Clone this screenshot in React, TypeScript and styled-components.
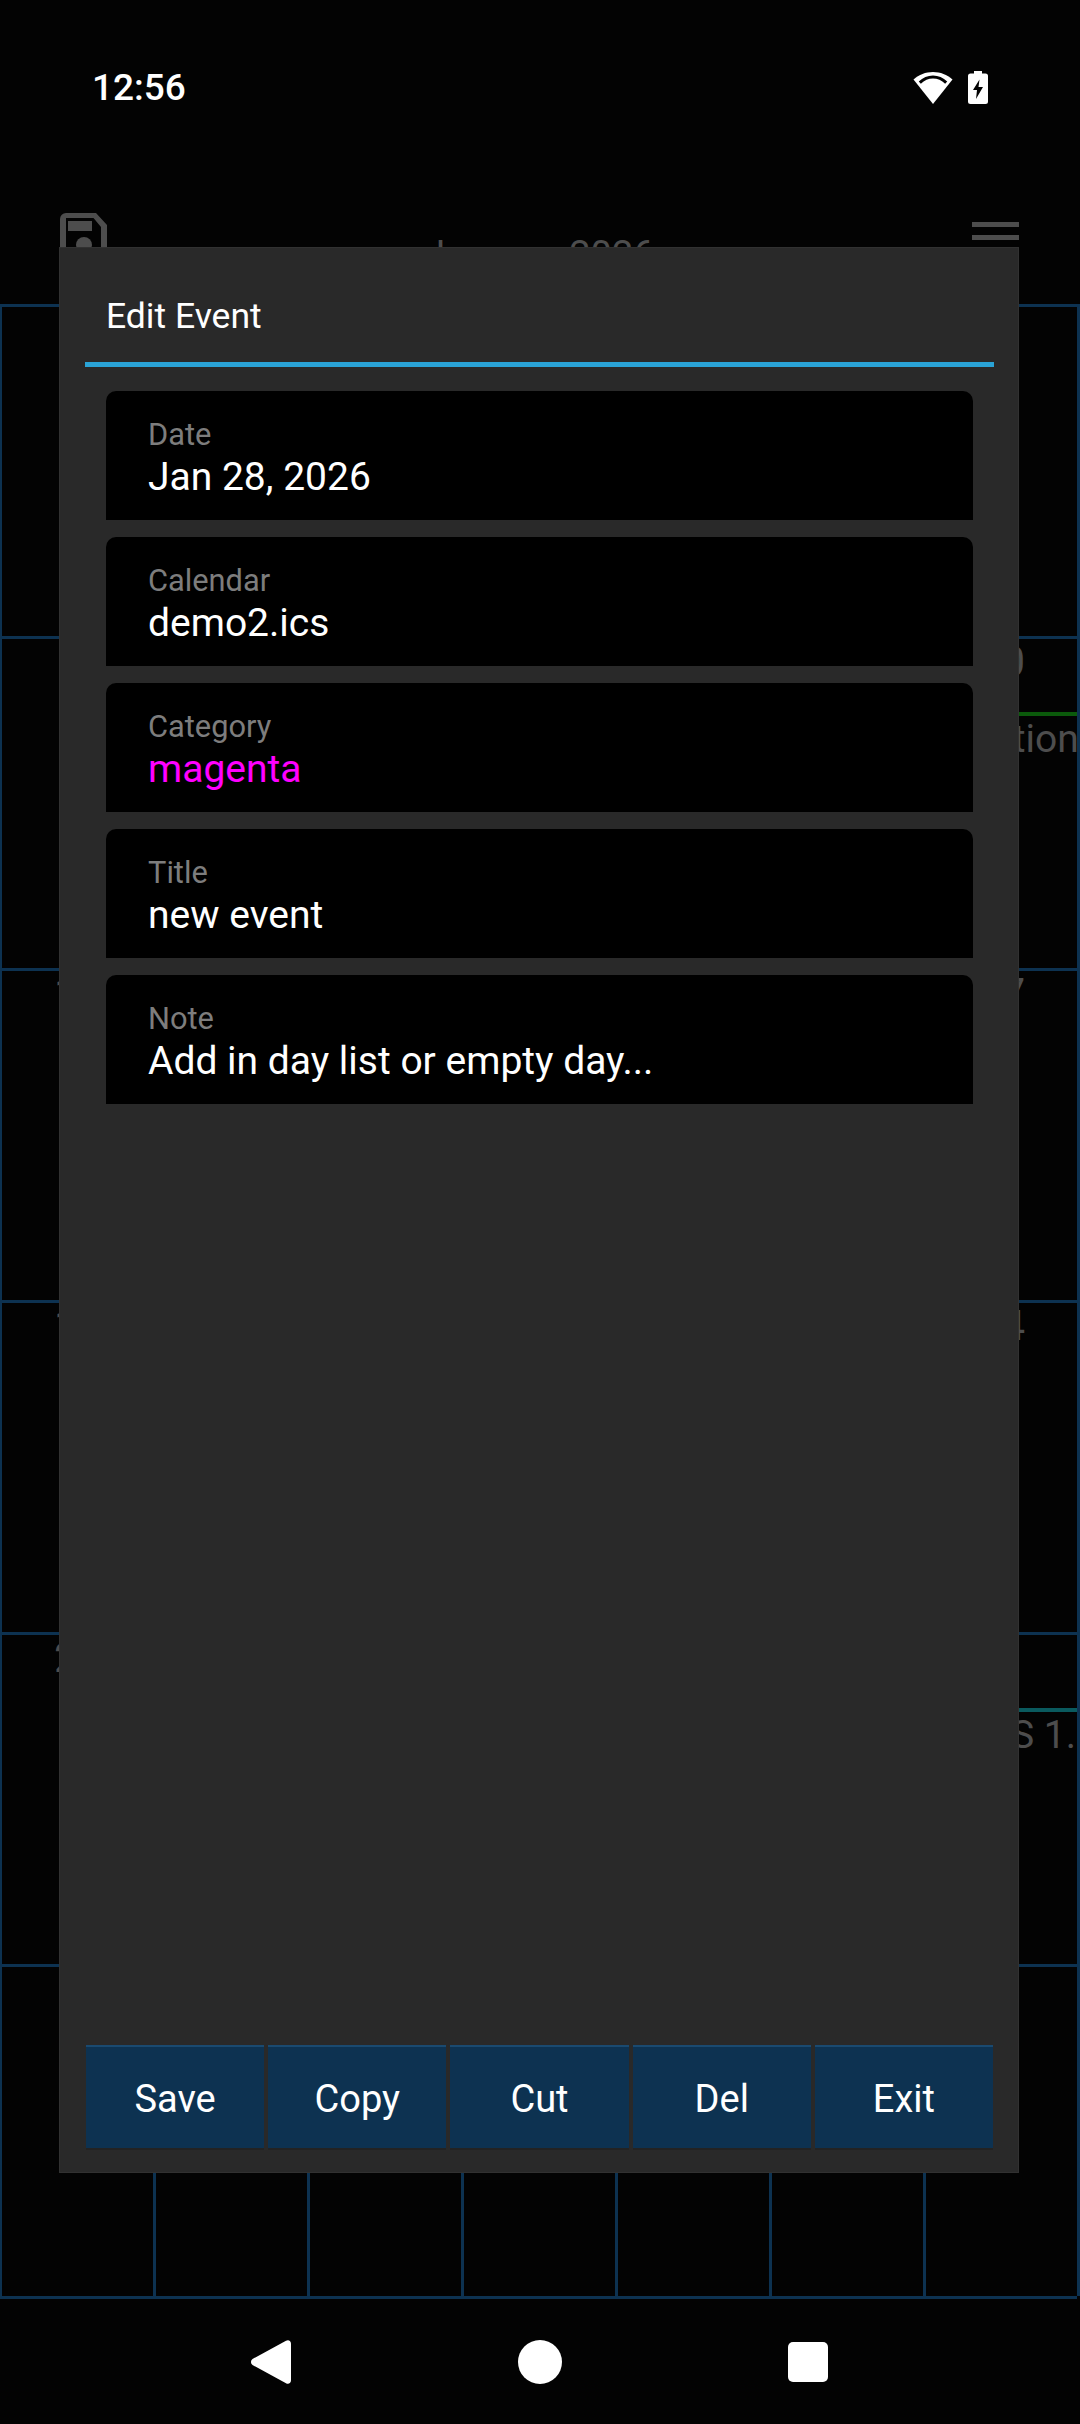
import styled, { createGlobalStyle } from "styled-components";

const GlobalStyle = createGlobalStyle`
  html, body {
    margin: 0;
    padding: 0;
    background: #030303;
  }
  * {
    box-sizing: border-box;
  }
  body {
    font-family: Roboto, "Liberation Sans", sans-serif;
  }
`;

interface CalendarDay {
  day?: number;
  bar?: string;
  label?: string;
}

// January 2026 starts on a Thursday, days outside the month stay empty
const days: CalendarDay[] = Array.from({ length: 42 }, (_, index) => {
  const day = index - 3;
  if (day < 1 || day > 31) return {};
  if (day === 10) return { day, bar: "#0b5a0b", label: "Vacation" };
  if (day === 31) return { day, bar: "#0a5a5e", label: "ROMS 1.0" };
  return { day };
});

const fields = [
  { label: "Date", value: "Jan 28, 2026" },
  { label: "Calendar", value: "demo2.ics" },
  { label: "Category", value: "magenta", color: "#ff00ff" },
  { label: "Title", value: "new event" },
  { label: "Note", value: "Add in day list or empty day..." },
];

const actions = ["Save", "Copy", "Cut", "Del", "Exit"];

export default function App() {
  return (
    <Screen>
      <GlobalStyle />
      <StatusBar>
        <Clock>12:56</Clock>
        <StatusIcons>
          <svg width="40" height="32" viewBox="0 0 40 32">
            <path
              fill="#fff"
              d="M20 0C12.6 0 6 2.700.5 7.600L20 32 39.500 7.600C34 2.700 27.400 0 20 0Z"
            />
            <path
              fill="none"
              stroke="#030303"
              strokeWidth="3"
              d="M6.800 10.600C10.500 7 15 5 20 5s9.500 2 13.200 5.600"
            />
          </svg>
          <svg width="20" height="33" viewBox="0 0 20 33">
            <path
              fill="#fff"
              d="M6 0h8v2.500h3.500A2.500 2.500 0 0 1 20 5v25.500a2.500 2.500 0 0 1-2.500 2.500h-15A2.500 2.500 0 0 1 0 30.500V5a2.500 2.500 0 0 1 2.500-2.500H6Z"
            />
            <path fill="#030303" d="M11.500 8.500 5 19h4l-1 9 7-12h-4.500Z" />
          </svg>
        </StatusIcons>
      </StatusBar>

      <CalendarHeader>
        <svg width="47" height="47" viewBox="0 0 47 47">
          <path
            fill="#4d4d4d"
            fillRule="evenodd"
            d="M6 0h30l11 12v29a6 6 0 0 1-6 6H6a6 6 0 0 1-6-6V6a6 6 0 0 1 6-6Zm0 5v37h35V14L33.500 5Z"
          />
          <path fill="#4d4d4d" d="M8 8h24v10H8Z" />
          <circle cx="24" cy="32" r="8" fill="#4d4d4d" />
        </svg>
        <MonthTitle>January 2026</MonthTitle>
        <MenuIcon>
          <span />
          <span />
          <span />
        </MenuIcon>
      </CalendarHeader>

      <CalendarGrid>
        {days.map((cell, index) => (
          <DayCell key={index}>
            <DayNumber>{cell.day}</DayNumber>
            {cell.bar && <EventBar $color={cell.bar} />}
            {cell.label && <EventLabel>{cell.label}</EventLabel>}
          </DayCell>
        ))}
      </CalendarGrid>

      <NavBar>
        <svg width="40" height="44" viewBox="0 0 40 44">
          <path
            fill="#fff"
            d="M35 .800c2.500-1.500 5 .2 5 3v36.400c0 2.800-2.500 4.500-5 3L1.500 25c-2-1.500-2-4.500 0-6Z"
          />
        </svg>
        <svg width="44" height="44" viewBox="0 0 44 44">
          <circle cx="22" cy="22" r="22" fill="#fff" />
        </svg>
        <svg width="40" height="40" viewBox="0 0 40 40">
          <rect width="40" height="40" rx="5" fill="#fff" />
        </svg>
      </NavBar>

      <Dialog>
        <DialogTitle>Edit Event</DialogTitle>
        <TitleRule />
        <FieldList>
          {fields.map((field) => (
            <Field key={field.label}>
              <FieldLabel>{field.label}</FieldLabel>
              <FieldValue $color={field.color}>{field.value}</FieldValue>
            </Field>
          ))}
        </FieldList>
        <ActionRow>
          {actions.map((action) => (
            <ActionButton key={action}>{action}</ActionButton>
          ))}
        </ActionRow>
      </Dialog>
    </Screen>
  );
}

const Screen = styled.div`
  position: relative;
  display: flex;
  flex-direction: column;
  width: 1080px;
  height: 2424px;
  overflow: hidden;
  background: #030303;
`;

const StatusBar = styled.div`
  display: flex;
  align-items: center;
  justify-content: space-between;
  height: 175px;
  padding: 0 92px 0 92px;
`;

const Clock = styled.span`
  font-size: 37px;
  font-weight: 500;
  color: #ffffff;
`;

const StatusIcons = styled.div`
  display: flex;
  align-items: center;
  gap: 15px;
`;

const CalendarHeader = styled.header`
  display: flex;
  align-items: flex-start;
  justify-content: space-between;
  height: 129px;
  padding: 38px 61px 0 60px;
`;

const MonthTitle = styled.h1`
  margin: 20px 0 0;
  font-size: 38px;
  font-weight: 400;
  color: #4d4d4d;
`;

const MenuIcon = styled.div`
  display: flex;
  flex-direction: column;
  gap: 8px;
  width: 47px;
  margin-top: 9px;

  & > span {
    height: 5px;
    background: #4d4d4d;
  }
`;

const CalendarGrid = styled.div`
  display: grid;
  grid-template-columns: repeat(7, 1fr);
  grid-template-rows: repeat(6, 332px);
  height: 1992px;
  margin-left: -1px;
  border-top: 3px solid #0d3251;
  border-right: 3px solid #0d3251;
`;

const DayCell = styled.div`
  display: flex;
  flex-direction: column;
  align-items: stretch;
  min-width: 0;
  border-left: 3px solid #0d3251;
  border-bottom: 3px solid #0d3251;
`;

const DayNumber = styled.span`
  flex: none;
  height: 75px;
  margin-top: -2px;
  font-size: 42px;
  line-height: 49px;
  text-align: center;
  color: #4d4d4d;
`;

const EventBar = styled.div<{ $color: string }>`
  flex: none;
  height: 4px;
  background: ${(props) => props.$color};
`;

const EventLabel = styled.span`
  overflow: hidden;
  font-size: 39px;
  white-space: nowrap;
  color: #4d4d4d;
`;

const NavBar = styled.nav`
  display: flex;
  align-items: center;
  justify-content: space-between;
  height: 128px;
  padding: 3px 252px 0 251px;
`;

const Dialog = styled.section`
  position: absolute;
  top: 247px;
  left: 59px;
  display: flex;
  flex-direction: column;
  width: 960px;
  height: 1926px;
  padding: 0 25px 25px 27px;
  background: #292929;
  box-shadow: inset 0 0 0 1px #313131;
`;

const DialogTitle = styled.h2`
  height: 115px;
  margin: 0;
  padding: 24px 0 0 20px;
  font-size: 35.5px;
  font-weight: 400;
  line-height: 90px;
  color: #ffffff;
`;

const TitleRule = styled.div`
  flex: none;
  height: 5px;
  margin-left: -1px;
  background: #2aa3d6;
`;

const FieldList = styled.div`
  display: flex;
  flex: 1;
  flex-direction: column;
  gap: 17px;
  padding: 24px 21px 0 20px;
`;

const Field = styled.div`
  display: flex;
  flex-direction: column;
  justify-content: center;
  height: 129px;
  padding: 4px 42px 0;
  border-radius: 10px 10px 0 0;
  background: #000000;
`;

const FieldLabel = styled.span`
  font-size: 30.8px;
  line-height: 38px;
  color: #7d7d7d;
`;

const FieldValue = styled.span<{ $color?: string }>`
  font-size: 39px;
  line-height: 46px;
  color: ${(props) => props.$color ?? "#ffffff"};
`;

const ActionRow = styled.div`
  display: flex;
  gap: 4px;
  margin-right: 1px;
`;

const ActionButton = styled.button`
  flex: 1;
  height: 103px;
  padding: 2px 0 0;
  border: 0;
  border-top: 2px solid #1a4a70;
  font-family: inherit;
  font-size: 38px;
  color: #ffffff;
  background: #0d3251;
  box-shadow: 0 2px 0 #232323;
`;
